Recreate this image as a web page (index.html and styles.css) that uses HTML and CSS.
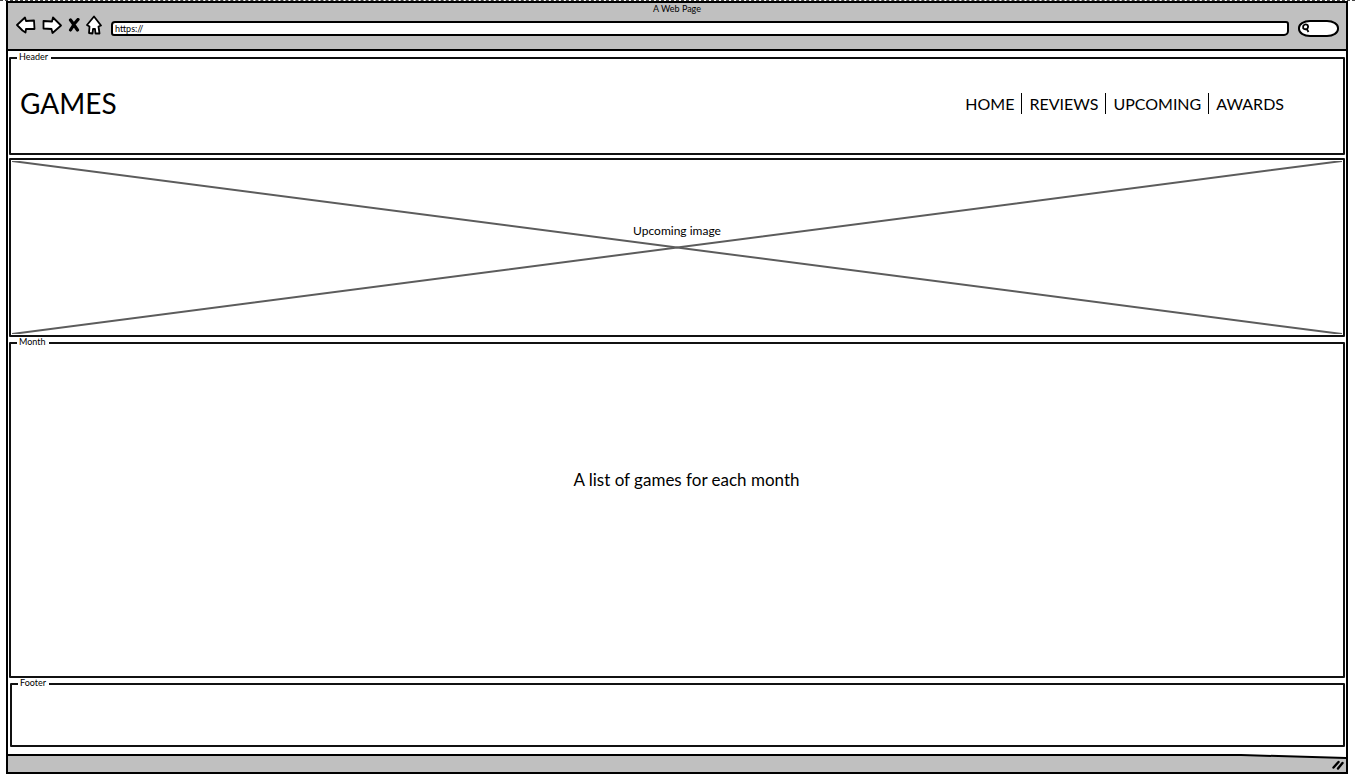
FILE: index.html
```html
<!DOCTYPE html>
<html lang="en">
<head>
<meta charset="utf-8">
<title>A Web Page</title>
<link rel="stylesheet" href="styles.css">
</head>
<body>
<div class="window">
  <div class="chrome">
    <div class="chrome-title">A Web Page</div>
    <div class="toolbar">
      <div class="buttons">
        <button type="button" class="tool" aria-label="Back"><svg width="20" height="18" viewBox="0 0 20 18"><path class="shape" d="M1 9 L9 1.5 L10 5 L18 4.5 L18.5 13 L10 13 L9.5 16.5 L6.5 14.5 Z"/></svg></button>
        <button type="button" class="tool" aria-label="Forward"><svg width="20" height="18" viewBox="0 0 20 18"><path class="shape" d="M19 9.5 L11 1.5 L10 5.5 L1.5 5 L1.5 12.5 L9.5 13 L10.5 17 Z"/></svg></button>
        <button type="button" class="tool" aria-label="Stop"><svg width="12" height="14" viewBox="0 0 12 14"><path class="cross" d="M2.5 2 L4 4 L9.5 12 M10 1.5 L7 5 L2.5 12"/></svg></button>
        <button type="button" class="tool" aria-label="Home"><svg width="16" height="20" viewBox="0 0 16 20"><path class="shape" d="M8 1.5 L15 10.5 L12.5 11.5 L13.5 18.5 L9.5 18.5 L9 14 L7 14 L6.5 18.5 L3 18 L3.5 11.5 L1 10 Z"/></svg></button>
      </div>
      <input class="address" type="text" value="https://" aria-label="Address">
      <label class="search">
        <svg width="8" height="10" viewBox="0 0 8 10"><path class="lens" d="M1.2 3 Q3 .5 5.5 2 Q6.8 4 5.2 5.8 Q2.5 7 1.2 5.2 Z M4.5 5.5 L6.5 9"/></svg>
        <input class="search-input" type="text" aria-label="Search">
      </label>
    </div>
  </div>

  <div class="page">
    <header class="panel header">
      <span class="panel-label">Header</span>
      <h1 class="brand">GAMES</h1>
      <nav class="nav">
        <a href="#home">HOME</a>
        <a href="#reviews">REVIEWS</a>
        <a href="#upcoming">UPCOMING</a>
        <a href="#awards">AWARDS</a>
      </nav>
    </header>
    <section class="panel picture">
      <svg class="picture-cross" viewBox="0 0 100 100" preserveAspectRatio="none"><path d="M0 0 L100 100 M100 0 L0 100"/></svg>
      <span class="picture-text">Upcoming image</span>
    </section>
    <main class="panel month">
      <span class="panel-label">Month</span>
      <p class="month-text">A list of games for each month</p>
    </main>
    <footer class="panel footer">
      <span class="panel-label">Footer</span>
    </footer>
  </div>

  <div class="status">
    <svg class="status-edge" viewBox="0 0 1340 5" preserveAspectRatio="none"><path class="edge-fill" d="M0 0 H1340 V4 L1235 1 L0 1 Z"/><path class="edge-line" d="M0 1 L1235 1 L1340 4"/></svg>
    <svg class="grip" width="12" height="10" viewBox="0 0 12 10"><path d="M1.5 7.5 L6.5 2 M6 8.5 L10.5 3"/></svg>
  </div>
</div>
</body>
</html>
```
FILE: styles.css
```css
* { box-sizing: border-box; }

body {
  margin: 0;
  color: #000;
  background: #fff;
  font-family: Lato, "Open Sans", sans-serif;
  border-top: 1px dashed #444;
}

.window {
  display: flex;
  flex-direction: column;
  min-height: calc(100vh - 4px);
  margin: 0 7px 3px 6px;
  border: 2px solid #000;
}

.chrome {
  height: 48px;
  background: #c0c0c0;
  border-bottom: 2px solid #000;
}

.chrome-title {
  font-size: 9px;
  line-height: 12px;
  text-align: center;
}

.toolbar {
  display: flex;
  align-items: center;
  gap: 9px;
  height: 26px;
  padding: 0 7px 0 8px;
}

.buttons {
  display: flex;
  align-items: center;
  justify-content: space-between;
  width: 86px;
  height: 20px;
  margin-bottom: 6px;
}

.tool {
  display: flex;
  padding: 0;
  border: 0;
  background: none;
}

.shape {
  fill: #fff;
  stroke: #000;
  stroke-width: 1.8;
  stroke-linejoin: round;
}

.cross {
  fill: none;
  stroke: #000;
  stroke-width: 3.2;
  stroke-linecap: round;
}

.address {
  flex: 1;
  min-width: 0;
  height: 15px;
  padding: 0 2px;
  border: 2px solid #000;
  border-radius: 4px 3px 5px 3px;
  background: #fff;
  color: #000;
  font: 9px/11px Lato, sans-serif;
}

.search {
  display: flex;
  align-items: center;
  width: 41px;
  height: 17px;
  padding-left: 2px;
  border: 2px solid #000;
  border-radius: 12px / 8px;
  background: #fff;
}

.search-input {
  flex: 1;
  width: 0;
  height: 11px;
  padding: 0;
  border: 0;
  background: none;
  font-size: 9px;
}

.lens {
  fill: none;
  stroke: #000;
  stroke-width: 1.8;
}

.page {
  display: flex;
  flex: 1;
  flex-direction: column;
  gap: 5px;
  padding: 6px 1px 7px;
}

.panel {
  position: relative;
  border: 2px solid #111;
  border-radius: 1px;
}

.panel-label {
  position: absolute;
  top: -7px;
  left: 6px;
  padding: 0 3px 0 2px;
  background: #fff;
  font-size: 9px;
  line-height: 9px;
}

.header {
  display: flex;
  align-items: center;
  justify-content: space-between;
  height: 98px;
  padding: 0 59px 6px 9px;
}

.brand {
  margin: 0;
  font-size: 28px;
  font-weight: 400;
  line-height: 32px;
}

.nav {
  display: flex;
  font-size: 16px;
  line-height: 21px;
}

.nav a {
  padding: 0 7px;
  color: #000;
  text-decoration: none;
}

.nav a + a { border-left: 1px solid #000; }

.nav a:last-child { padding-right: 0; }

.picture {
  display: flex;
  justify-content: center;
  height: 179px;
  margin-top: -2px;
  padding: 1px;
}

.picture-cross {
  flex: 1;
  width: 100%;
  height: 100%;
}

.picture-cross path {
  fill: none;
  stroke: #5c5c5c;
  stroke-width: 2;
  vector-effect: non-scaling-stroke;
}

.picture-text {
  position: absolute;
  top: 62px;
  font-size: 12px;
  line-height: 18px;
}

.month {
  flex: 1;
  padding: 124px 0 0 19px;
}

.month-text {
  margin: 0;
  font-size: 17px;
  line-height: 24px;
  text-align: center;
}

.footer {
  height: 64px;
  margin-left: 1px;
}

.status {
  display: flex;
  justify-content: flex-end;
  height: 18px;
  position: relative;
  background: #c0c0c0;
}

.status-edge {
  position: absolute;
  top: 0;
  left: 0;
  width: 100%;
  height: 5px;
}

.edge-fill { fill: #fff; }

.edge-line {
  fill: none;
  stroke: #000;
  stroke-width: 2;
}

.grip { margin: 6px 2px 0 0; }

.grip path {
  stroke: #000;
  stroke-width: 2.4;
  stroke-linecap: round;
}
```
